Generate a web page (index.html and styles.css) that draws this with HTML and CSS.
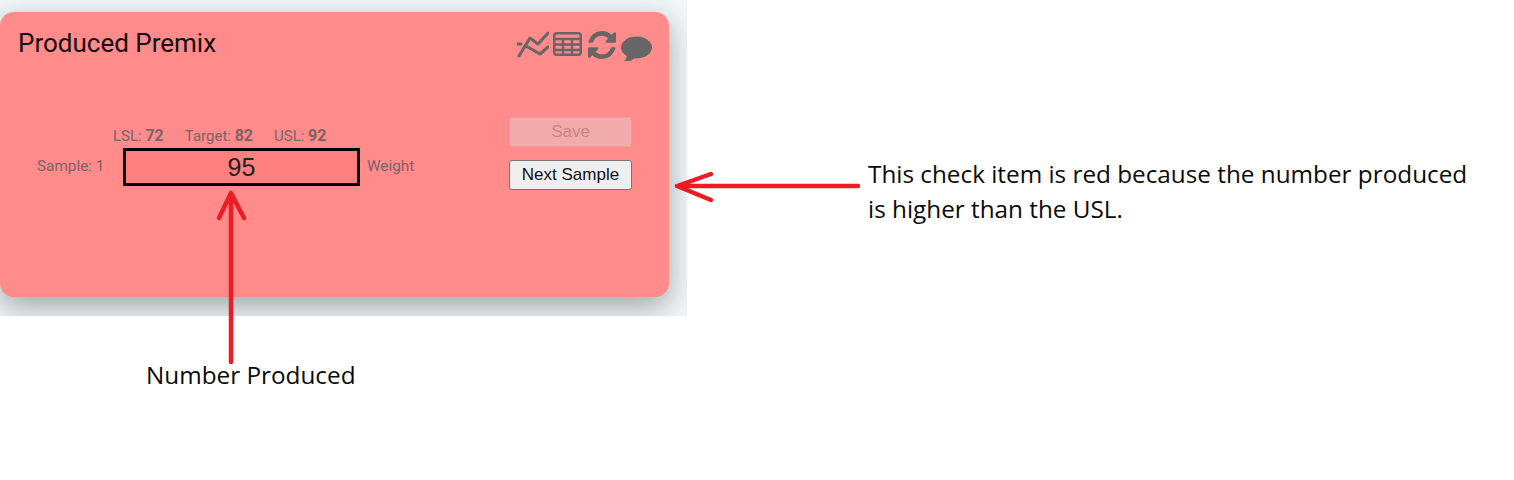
FILE: index.html
```html
<!DOCTYPE html>
<html lang="en">
<head>
    <meta charset="UTF-8">
    <meta name="viewport" content="width=device-width, initial-scale=1.0">
    <title>Produced Premix</title>
    <link rel="stylesheet" href="styles.css">
</head>
<body>
    <div class="panel">
        <div class="card">
            <div class="card-header">
                <h2>Produced Premix</h2>
                <div class="icons">
                    <svg class="icon-chart" width="32" height="27" viewBox="0 0 32 27">
                        <path d="M2 25 L13 7 L21 13 L31 2" fill="none" stroke="#666" stroke-width="3" stroke-linecap="round" stroke-linejoin="round"/>
                        <path d="M1 13 H4 M9 15 L23 23 L31 16" fill="none" stroke="#666" stroke-width="3" stroke-linecap="round" stroke-linejoin="round"/>
                    </svg>
                    <svg class="icon-table" width="29" height="24" viewBox="0 0 29 24">
                        <rect x="1.25" y="1.25" width="26.5" height="21.5" rx="2.5" fill="none" stroke="#666" stroke-width="2.5"/>
                        <path d="M1 7 H28 M1 12.5 H28 M1 18 H28 M10 7 V23 M19 7 V23" stroke="#666" stroke-width="2.4"/>
                    </svg>
                    <svg class="icon-refresh" width="28" height="28" viewBox="128 128 1536 1536">
                        <path fill="#666" d="M1639 1056q0 5-1 7-64 268-268 434.5t-478 166.5q-146 0-282.5-55t-243.5-157l-129 129q-19 19-45 19t-45-19-19-45v-448q0-26 19-45t45-19h448q26 0 45 19t19 45-19 45l-137 137q71 66 161 102t187 36q134 0 250-65t186-179q11-17 53-117 8-23 30-23h192q13 0 22.5 9.5t9.5 22.5zm25-800v448q0 26-19 45t-45 19h-448q-26 0-45-19t-19-45 19-45l138-138q-148-137-349-137-134 0-250 65t-186 179q-11 17-53 117-8 23-30 23h-199q-13 0-22.5-9.5t-9.5-22.5v-7q65-268 270-434.5t480-166.5q146 0 284 55.5t245 156.5l130-129q19-19 45-19t45 19 19 45z"/>
                    </svg>
                    <svg class="icon-comment" width="31" height="27" viewBox="0 128 1792 1536">
                        <path fill="#666" d="M1792 896q0 174-120 321.5t-326 233-450 85.5q-70 0-145-8-198 175-460 242-49 14-114 22-17 2-30.5-9t-17.5-29v-1q-3-4-.5-12t2-10 4.5-9.5l6-9 7-8.5 8-9q7-8 31-34.5t34.5-38 31-39.5 32.5-51 27-59 26-76q-157-89-247.5-220t-90.5-281q0-130 71-248.5t191-204.5 286-136.5 348-50.5q244 0 450 85.5t326 233 120 321.5z"/>
                    </svg>
                </div>
            </div>
            <div class="card-body">
                <div class="entry">
                    <div class="limits">
                        <span>LSL: <b>72</b></span>
                        <span>Target: <b>82</b></span>
                        <span>USL: <b>92</b></span>
                    </div>
                    <div class="entry-row">
                        <span class="sample">Sample: 1</span>
                        <div class="value">95</div>
                        <span class="unit">Weight</span>
                    </div>
                </div>
                <div class="actions">
                    <button class="btn" disabled>Save</button>
                    <button class="btn">Next Sample</button>
                </div>
            </div>
        </div>
    </div>

    <!-- annotations pasted over the screenshot -->
    <svg class="arrows" width="1514" height="480" viewBox="0 0 1514 480">
        <path d="M858 186 H677 M711 174 L677 186 L711 200" fill="none" stroke="#ed1c24" stroke-width="4.5" stroke-linecap="round" stroke-linejoin="round"/>
        <path d="M231 362 V193 M219 218 L231 193 L244 218" fill="none" stroke="#ed1c24" stroke-width="4.5" stroke-linecap="round" stroke-linejoin="round"/>
    </svg>
    <p class="note note-red">This check item is red because the number produced<br>is higher than the USL.</p>
    <p class="note note-number">Number Produced</p>
</body>
</html>
```

FILE: styles.css
```css
html, body { margin: 0; height: 480px; overflow: hidden; }
body { background: white; font-family: Roboto, sans-serif; position: relative; }

.panel {
    width: 669px;
    height: 285px;
    padding: 12px 18px 19px 0;
    background: #f2f7f9;
    overflow: hidden;
}
.card {
    height: 285px;
    background: #ff8b8b;
    border-radius: 14px;
    box-shadow: 0 10px 30px rgba(40, 50, 60, 0.42);
}
.card-header {
    display: flex;
    justify-content: space-between;
    padding: 15px 17px 0 18px;
}
.card-header h2 {
    margin: 0;
    font-size: 26px;
    font-weight: 400;
    line-height: 33px;
    color: #111;
}
.icons { display: flex; align-items: flex-start; margin-top: 4px; }
.icon-table { margin-left: 4px; margin-top: 1px; }
.icon-refresh { margin-left: 6px; }
.icon-comment { margin-left: 5px; margin-top: 3px; }

.card-body {
    display: flex;
    justify-content: space-between;
    padding: 56px 37px 0 37px;
}
.entry { padding-top: 10px; color: #7e6266; font-size: 15.3px; }
.limits { display: flex; gap: 21px; padding-left: 76px; line-height: 18px; font-size: 15px; }
.limits b { font-size: 16px; }
.entry-row { display: flex; align-items: center; margin-top: 3px; }
.sample { width: 86px; margin-bottom: 2px; }
.value {
    width: 231px;
    height: 32px;
    border: 3px solid black;
    background: #ff7e7e;
    text-align: center;
    font-family: "Liberation Sans", Arial, sans-serif;
    font-size: 25px;
    line-height: 32px;
    color: #222;
}
.unit { margin-left: 7px; margin-bottom: 2px; }

.actions { display: flex; flex-direction: column; gap: 13px; width: 123px; }
.btn {
    height: 30px;
    padding: 0;
    background: #efefef;
    border: 1px solid #767676;
    border-radius: 3px;
    font-family: "Liberation Sans", Arial, sans-serif;
    font-size: 17px;
    color: #111;
}
.btn:disabled {
    background: #f2abab;
    border-color: #ee9c9c;
    color: #c98487;
}

.arrows { position: absolute; left: 0; top: 0; }
.note {
    position: absolute;
    margin: 0;
    font-family: "Open Sans", sans-serif;
    font-size: 24.3px;
    line-height: 35px;
    color: #0a0a0a;
    white-space: nowrap;
}
.note-red { left: 868px; top: 156px; }
.note-number { left: 146px; top: 357px; }
```
